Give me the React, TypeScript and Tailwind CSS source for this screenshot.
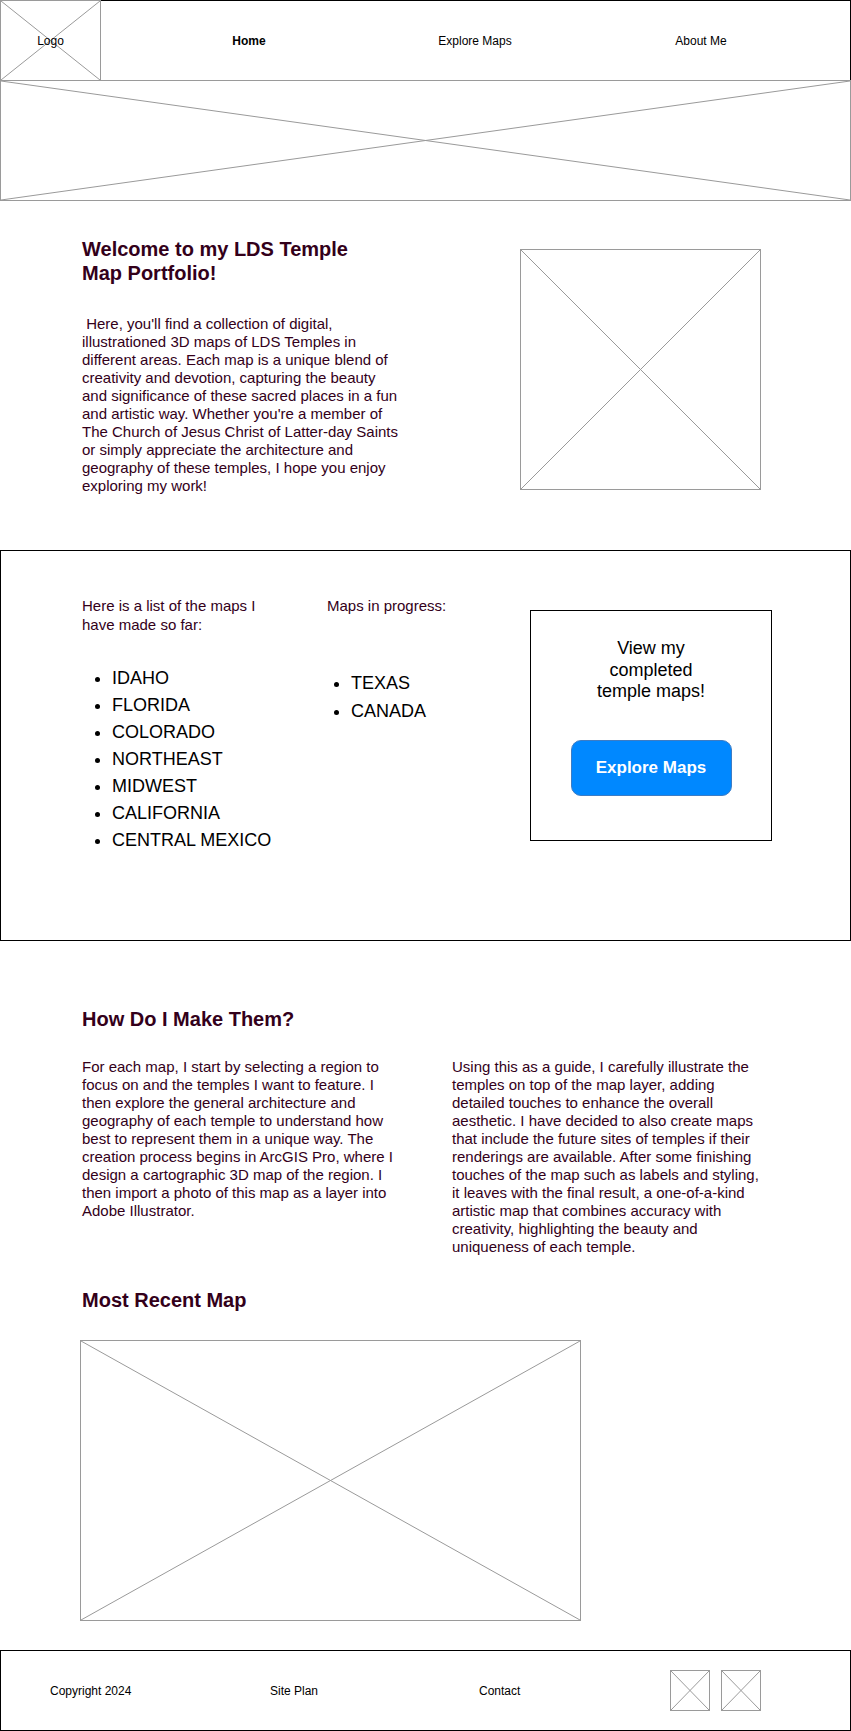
import React from "react";

const maps = ["IDAHO", "FLORIDA", "COLORADO", "NORTHEAST", "MIDWEST", "CALIFORNIA", "CENTRAL MEXICO"];
const inProgress = ["TEXAS", "CANADA"];

// grey wireframe box with an X through it
function Placeholder({ className = "", children }: { className?: string; children?: React.ReactNode }) {
  return (
    <div className={`relative border border-[#9a9a9a] ${className}`}>
      <svg className="absolute inset-0 h-full w-full" viewBox="0 0 100 100" preserveAspectRatio="none">
        <line x1="0" y1="0" x2="100" y2="100" stroke="#9a9a9a" strokeWidth="1" vectorEffect="non-scaling-stroke" />
        <line x1="100" y1="0" x2="0" y2="100" stroke="#9a9a9a" strokeWidth="1" vectorEffect="non-scaling-stroke" />
      </svg>
      {children}
    </div>
  );
}

export default function App() {
  return (
    <div className="min-h-[1731px] w-[851px] bg-white font-['Liberation_Sans',Arial,sans-serif] text-[#33001a]">
      {/* Header */}
      <header className="flex h-[81px]">
        <Placeholder className="flex w-[101px] items-center justify-center">
          <span className="relative text-[12px] text-black">Logo</span>
        </Placeholder>
        <nav className="flex flex-1 items-center border border-l-0 border-black pl-[35px] text-[12px] text-black">
          <a className="w-[226px] text-center font-bold">Home</a>
          <a className="w-[226px] text-center">Explore Maps</a>
          <a className="w-[226px] text-center">About Me</a>
        </nav>
      </header>

      {/* Hero banner */}
      <Placeholder className="-mt-px h-[121px] w-full" />

      {/* Intro */}
      <section className="flex pl-[82px] pt-[36px]">
        <div className="w-[438px]">
          <h1 className="w-[300px] text-[20px] font-bold leading-[24px]">Welcome to my LDS Temple Map Portfolio!</h1>
          <p className="mt-[30px] w-[322px] text-[15px] leading-[18px]">
            &nbsp;Here, you'll find a collection of digital, illustrationed 3D maps of LDS Temples in different areas. Each map is a
            unique blend of creativity and devotion, capturing the beauty and significance of these sacred places in a fun and
            artistic way. Whether you're a member of The Church of Jesus Christ of Latter-day Saints or simply appreciate the
            architecture and geography of these temples, I hope you enjoy exploring my work!
          </p>
        </div>
        <Placeholder className="mt-[12px] h-[241px] w-[241px]" />
      </section>

      {/* Map lists + CTA */}
      <section className="mt-[55px] flex h-[391px] border border-black pl-[81px] pt-[45px]">
        <div className="w-[245px]">
          <p className="w-[190px] text-[15px] leading-[19px]">Here is a list of the maps I have made so far:</p>
          <ul className="mt-[31px] list-disc pl-[30px] text-[18px] leading-[27px] text-black">
            {maps.map((m) => (
              <li key={m}>{m}</li>
            ))}
          </ul>
        </div>
        <div className="w-[203px]">
          <p className="text-[15px] leading-[19px]">Maps in progress:</p>
          <ul className="mt-[54px] list-disc pl-[24px] text-[18px] leading-[28px] text-black">
            {inProgress.map((m) => (
              <li key={m}>{m}</li>
            ))}
          </ul>
        </div>
        <div className="mt-[14px] flex h-[231px] w-[242px] flex-col items-center border border-black pt-[27px]">
          <p className="w-[118px] text-center text-[18px] leading-[21.5px] text-black">View my completed temple maps!</p>
          <button className="mt-[37px] flex h-[56px] w-[161px] items-center justify-center rounded-[10px] border border-[#3d7cc4] bg-[#0088ff] text-[17px] font-bold text-white">
            Explore Maps
          </button>
        </div>
      </section>

      {/* Process */}
      <section className="mt-[66px] pl-[82px]">
        <h2 className="text-[20px] font-bold leading-[24px]">How Do I Make Them?</h2>
        <div className="mt-[27px] flex text-[15px] leading-[18px]">
          <div className="w-[370px]">
            <p className="w-[322px]">
              For each map, I start by selecting a region to focus on and the temples I want to feature. I then explore the
              general architecture and geography of each temple to understand how best to represent them in a unique way. The
              creation process begins in ArcGIS Pro, where I design a cartographic 3D map of the region. I then import a photo of
              this map as a layer into Adobe Illustrator.
            </p>
          </div>
          <p className="w-[314px]">
            Using this as a guide, I carefully illustrate the temples on top of the map layer, adding detailed touches to enhance
            the overall aesthetic. I have decided to also create maps that include the future sites of temples if their renderings
            are available. After some finishing touches of the map such as labels and styling, it leaves with the final result, a
            one-of-a-kind artistic map that combines accuracy with creativity, highlighting the beauty and uniqueness of each
            temple.
          </p>
        </div>

        <h2 className="mt-[32px] text-[20px] font-bold leading-[24px]">Most Recent Map</h2>
        <Placeholder className="-ml-[2px] mt-[28px] h-[281px] w-[501px]" />
      </section>

      {/* Footer */}
      <footer className="mt-[29px] flex h-[81px] items-center border border-black pl-[49px] text-[12px] text-black">
        <span className="w-[220px]">Copyright 2024</span>
        <span className="w-[209px]">Site Plan</span>
        <span className="w-[191px]">Contact</span>
        <div className="flex gap-[11px]">
          <Placeholder className="h-[41px] w-[40px]" />
          <Placeholder className="h-[41px] w-[40px]" />
        </div>
      </footer>
    </div>
  );
}
